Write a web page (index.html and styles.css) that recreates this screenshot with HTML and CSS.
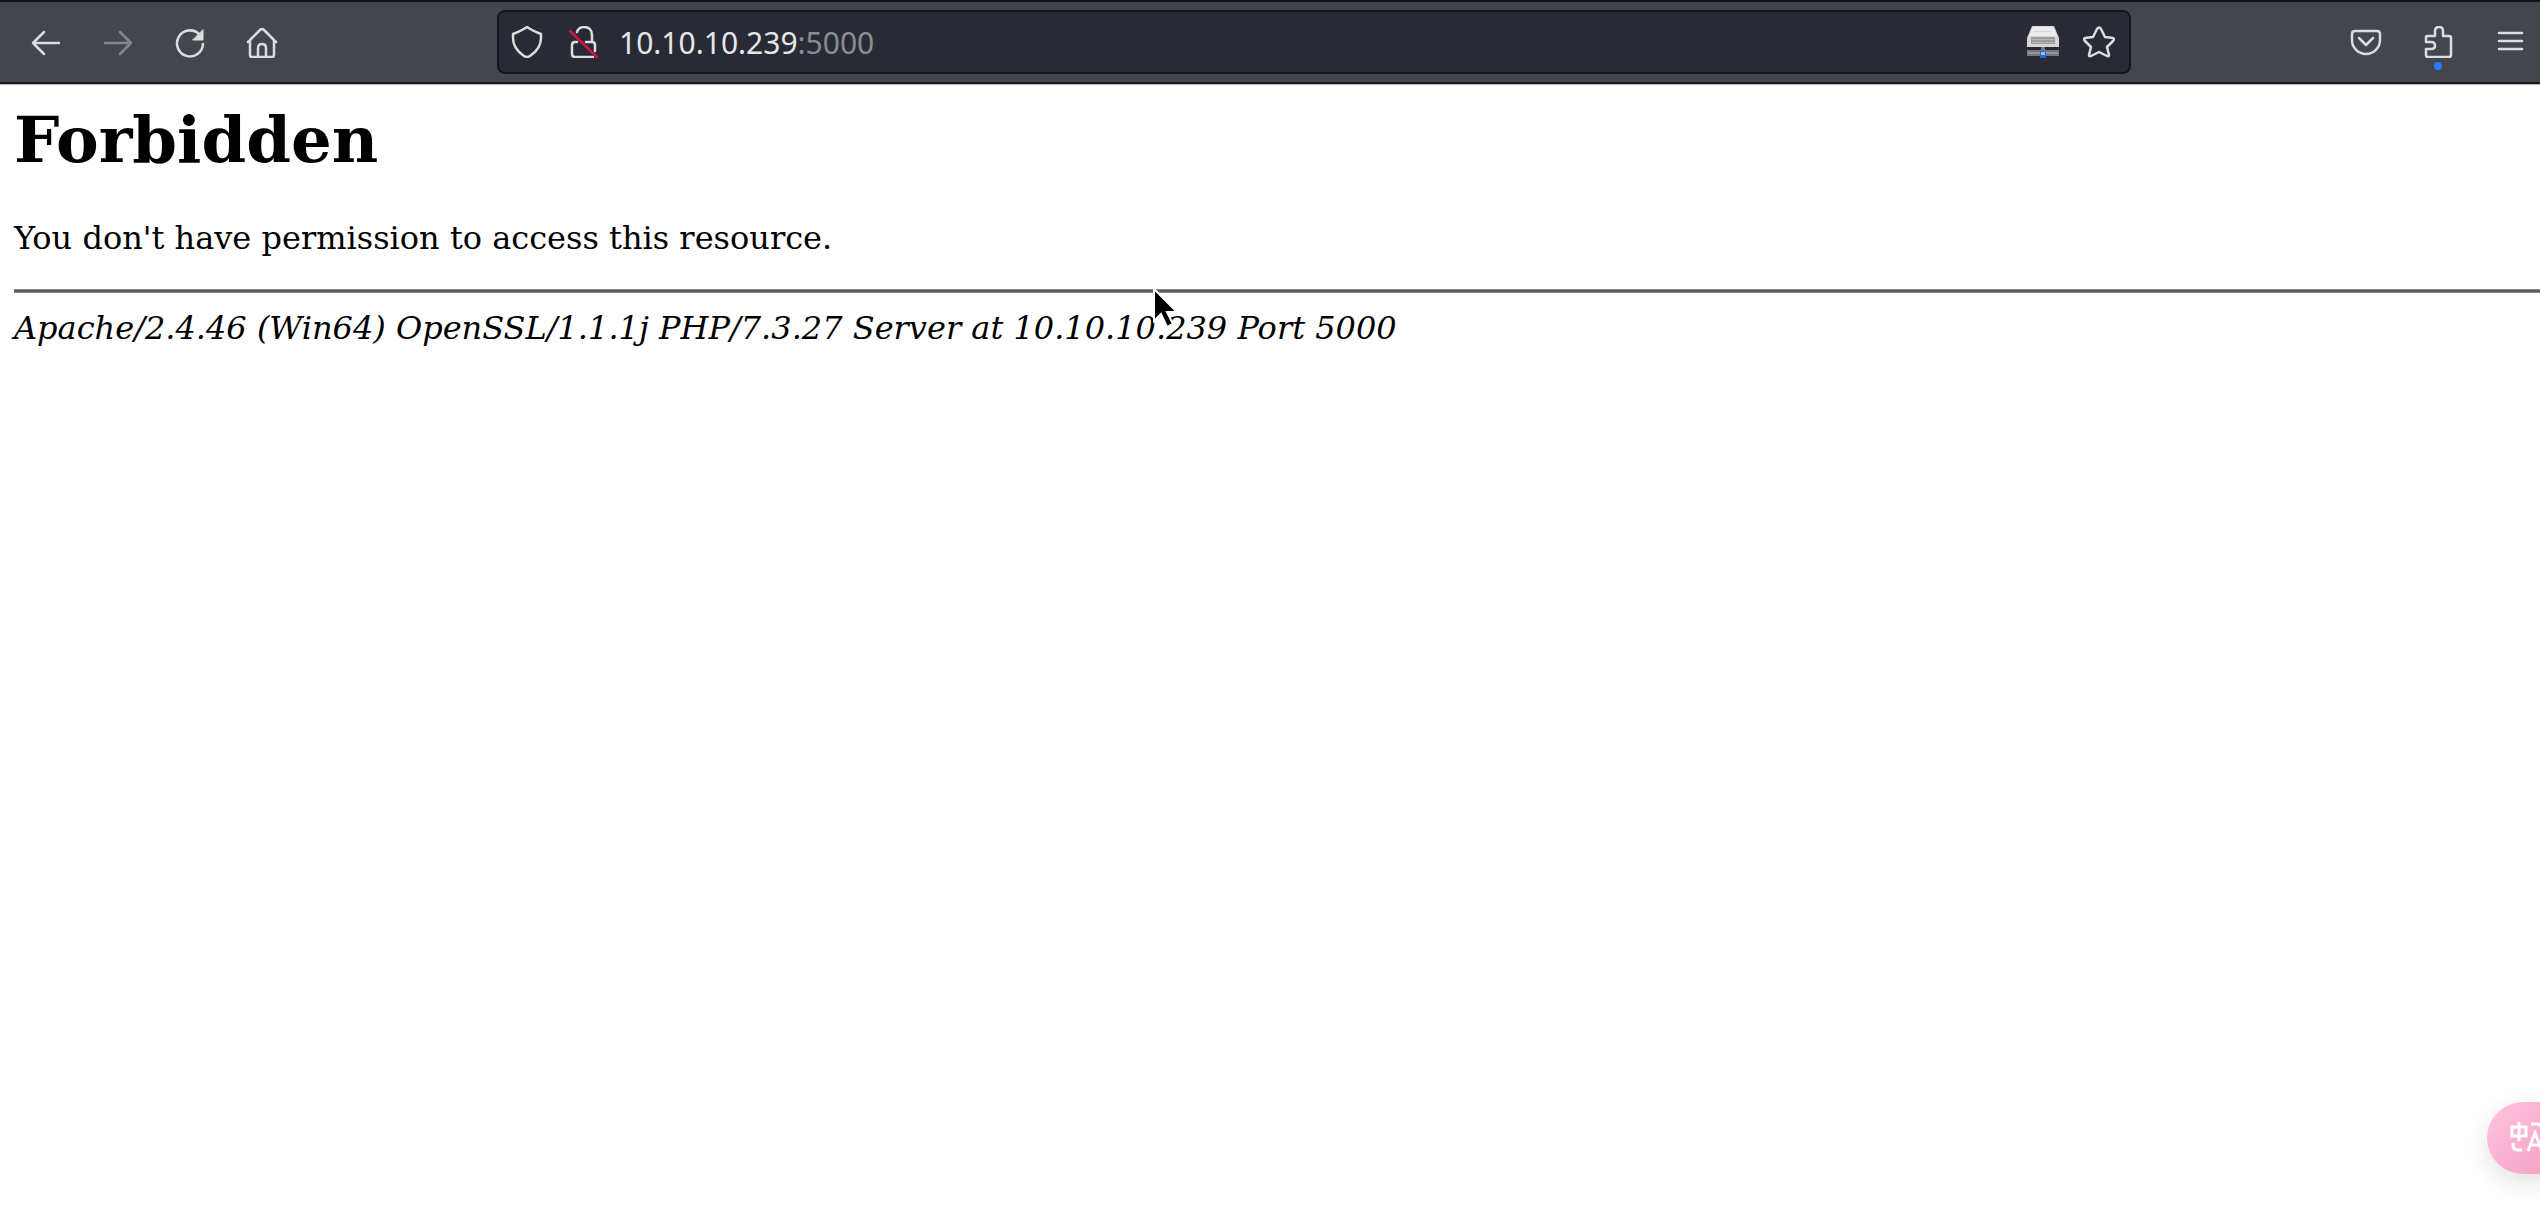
FILE: index.html
```html
<!DOCTYPE html>
<html lang="en">
<head>
<meta charset="utf-8">
<title>403 Forbidden</title>
<link rel="stylesheet" href="styles.css">
</head>
<body>
<header class="toolbar">
  <nav class="group group-start" aria-label="Navigation">
    <button class="tool" aria-label="Back"><svg class="icon" viewBox="0 0 32 32"><path d="M29 17H3M14 6 3 17l11 11"/></svg></button>
    <button class="tool" aria-label="Forward" disabled><svg class="icon" viewBox="0 0 32 32"><path d="M3 17h26M18 6l11 11-11 11"/></svg></button>
    <button class="tool" aria-label="Reload"><svg class="icon" viewBox="0 0 32 32"><path d="M29 18A13 13 0 1 1 25 8"/><path class="solid" d="M29 4v10H19z"/></svg></button>
    <button class="tool" aria-label="Home"><svg class="icon" viewBox="0 0 32 32"><path d="M2 16 14 4q2-2 4 0l12 12M4 14v15q0 2 2 2h20q2 0 2-2V14M12 31v-9q0-4 4-4t4 4v9"/></svg></button>
  </nav>
  <form class="address-bar">
    <button type="button" class="badge" aria-label="Tracking protection"><svg class="icon" viewBox="0 0 32 32"><path d="M16 1C12 4 7 6 2 8v4c0 8 5 14 11 18q3 2 6 0c6-4 11-10 11-18V8C25 6 20 4 16 1z"/></svg></button>
    <button type="button" class="badge" aria-label="Connection not secure"><svg class="icon" viewBox="0 0 32 32"><path d="M10 6C11 3 13 1 17 1c5 0 8 3 8 8v7M10 16H8q-3 0-3 3v9q0 3 3 3h18M19 16h6q3 0 3 3v6"/><path class="strike" d="M3 5l27 26"/></svg></button>
    <label class="url"><span class="host">10.10.10.239</span><span class="port">:5000</span><input class="url-input" type="text" aria-label="Address"></label>
    <button type="button" class="badge" aria-label="Proxy"><svg class="icon drive" viewBox="0 0 32 32"><path fill="#d6d6d6" d="M5 0h22l5 12v9H0v-9z"/><path fill="#ebebeb" d="M6 1h20l4 9H2z"/><path fill="#d4d4d4" d="M7 5h18v1H7z"/><path fill="#9c9c9c" d="M4 11h24v7H4z"/><path fill="#b8b8b8" d="M5 13h22v1H5zM5 16h22v1H5z"/><path fill="#777" d="M14 21h4v4h-4zM0 24h32v6H0z"/><path fill="#959595" d="M1 26h30v2H1z"/><path fill="#2563d8" d="M13 25h6v7h-6z"/><path fill="#8fc0ff" d="M14 26h4v3h-4z"/></svg></button>
    <button type="button" class="badge" aria-label="Bookmark"><svg class="icon" viewBox="0 0 32 32"><path d="M14 3q2-3 4 0l4 8 8 1q2 1 0 3l-6 6 2 8q0 2-2 1l-8-4-8 4q-2 1-2-1l2-8-6-6q-2-2 0-3l8-1z"/></svg></button>
  </form>
  <div class="group group-end">
    <button class="tool" aria-label="Pocket"><svg class="icon" viewBox="0 0 32 32"><path d="M5 5h22q3 0 3 3v6a14 14 0 0 1-28 0V8q0-3 3-3zM9 12l7 7 7-7"/></svg></button>
    <button class="tool" aria-label="Extensions"><svg class="icon" viewBox="0 0 32 32"><path d="M4 11q0-1 1-1h8V5q0-4 4-4t4 4v5h6q2 0 2 2v17q0 2-2 2H6q-2 0-2-2v-6h5q4 0 4-3.500t-4-3.500H4z"/></svg><span class="dot"></span></button>
    <button class="tool" aria-label="Menu"><svg class="icon" viewBox="0 0 32 32"><path d="M5 7h23M5 15h23M5 23h23"/></svg></button>
  </div>
</header>
<main class="page">
  <h1 class="title">Forbidden</h1>
  <p class="message">You don't have permission to access this resource.</p>
  <hr class="rule">
  <address class="server">Apache/2.4.46 (Win64) OpenSSL/1.1.1j PHP/7.3.27 Server at 10.10.10.239 Port 5000</address>
</main>
<button class="translate" aria-label="Translate page"><svg class="translate-icon" viewBox="0 0 40 36"><path d="M3 7h14v9H3zM10 2v19M4 23v2q0 5 5 5h4M22 4h6q5 0 5 6M19 31l7-18 7 18M21 25h10"/></svg></button>
<svg class="pointer" viewBox="0 0 28 42" aria-hidden="true"><path d="M2 1v32l7-7 6 13 6-3-6-12h10z"/></svg>
</body>
</html>
```
FILE: styles.css
```css
* { box-sizing: border-box; }

body {
  margin: 0;
  min-height: 100vh;
  overflow-x: hidden;
  background: #fff;
  color: #000;
  font-family: "DejaVu Serif", serif;
  font-size: 32px;
}

button {
  margin: 0;
  padding: 0;
  border: 0;
  background: none;
  color: inherit;
}

/* Browser toolbar */
.toolbar {
  display: flex;
  align-items: center;
  height: 84px;
  border-top: 2px solid #121318;
  border-bottom: 2px solid #1b1c21;
  background: #44464e;
  color: #dcdcde;
  box-shadow: 0 1px 0 #b4b4b6;
}

.group {
  display: flex;
  align-items: center;
}

.group-start {
  flex: 487 1 0;
  padding-left: 10px;
}

.group-end {
  flex: 415 1 0;
  justify-content: flex-end;
  margin-right: -6px;
}

.tool {
  position: relative;
  display: grid;
  place-items: center;
  width: 72px;
  height: 64px;
}

.tool:disabled { color: #85868b; }

.icon {
  display: block;
  width: 32px;
  height: 32px;
  fill: none;
  stroke: currentColor;
  stroke-width: 2.5;
  stroke-linecap: round;
  stroke-linejoin: round;
}

.solid { fill: currentColor; stroke-width: 1; }
.strike { stroke: #d3133f; }
.drive { stroke: none; }

.dot {
  position: absolute;
  left: 32px;
  bottom: 4px;
  width: 8px;
  height: 8px;
  border-radius: 50%;
  background: #2b7bff;
}

.address-bar {
  display: flex;
  flex: 1628 1 0;
  align-items: center;
  height: 64px;
  padding-right: 2px;
  border: 2px solid #15161b;
  border-radius: 8px;
  background: #282a36;
}

.badge {
  display: grid;
  place-items: center;
  width: 56px;
  height: 56px;
}

.url {
  display: flex;
  flex: 1;
  align-items: center;
  padding: 2px 0 0 8px;
  font-family: "Noto Sans", sans-serif;
  font-size: 30px;
  line-height: 40px;
}

.host { color: #e6e6e8; }
.port { color: #8b8c91; }

.url-input {
  flex: 1;
  min-width: 0;
  padding: 0;
  border: 0;
  outline: 0;
  background: none;
  color: inherit;
  font: inherit;
}

/* Error document */
.page { padding: 19px 0 0 14px; }

.title {
  margin: 0 0 42px;
  font-size: 64px;
  line-height: 74px;
}

.message {
  margin: 0 0 32px;
  line-height: 38px;
}

.rule {
  height: 4px;
  margin: 0 0 16px;
  border: 1px solid #8a8a8a;
  border-width: 1px 0;
  background: #5c5c5c;
}

.server { line-height: 38px; }

/* Overlays */
.translate {
  position: fixed;
  right: -20px;
  bottom: 46px;
  width: 73px;
  height: 72px;
  padding-left: 22px;
  border-radius: 36px 0 0 36px;
  background: linear-gradient(135deg, #ffc4de, #f3a0c3);
  box-shadow: 0 8px 24px rgba(0, 0, 0, 0.12);
}

.translate-icon {
  display: block;
  width: 40px;
  height: 36px;
  fill: none;
  stroke: #fff;
  stroke-width: 3;
}

.pointer {
  position: absolute;
  top: 288px;
  left: 1152px;
  width: 28px;
  height: 42px;
  fill: #000;
  stroke: #fff;
  stroke-width: 2;
}
```
